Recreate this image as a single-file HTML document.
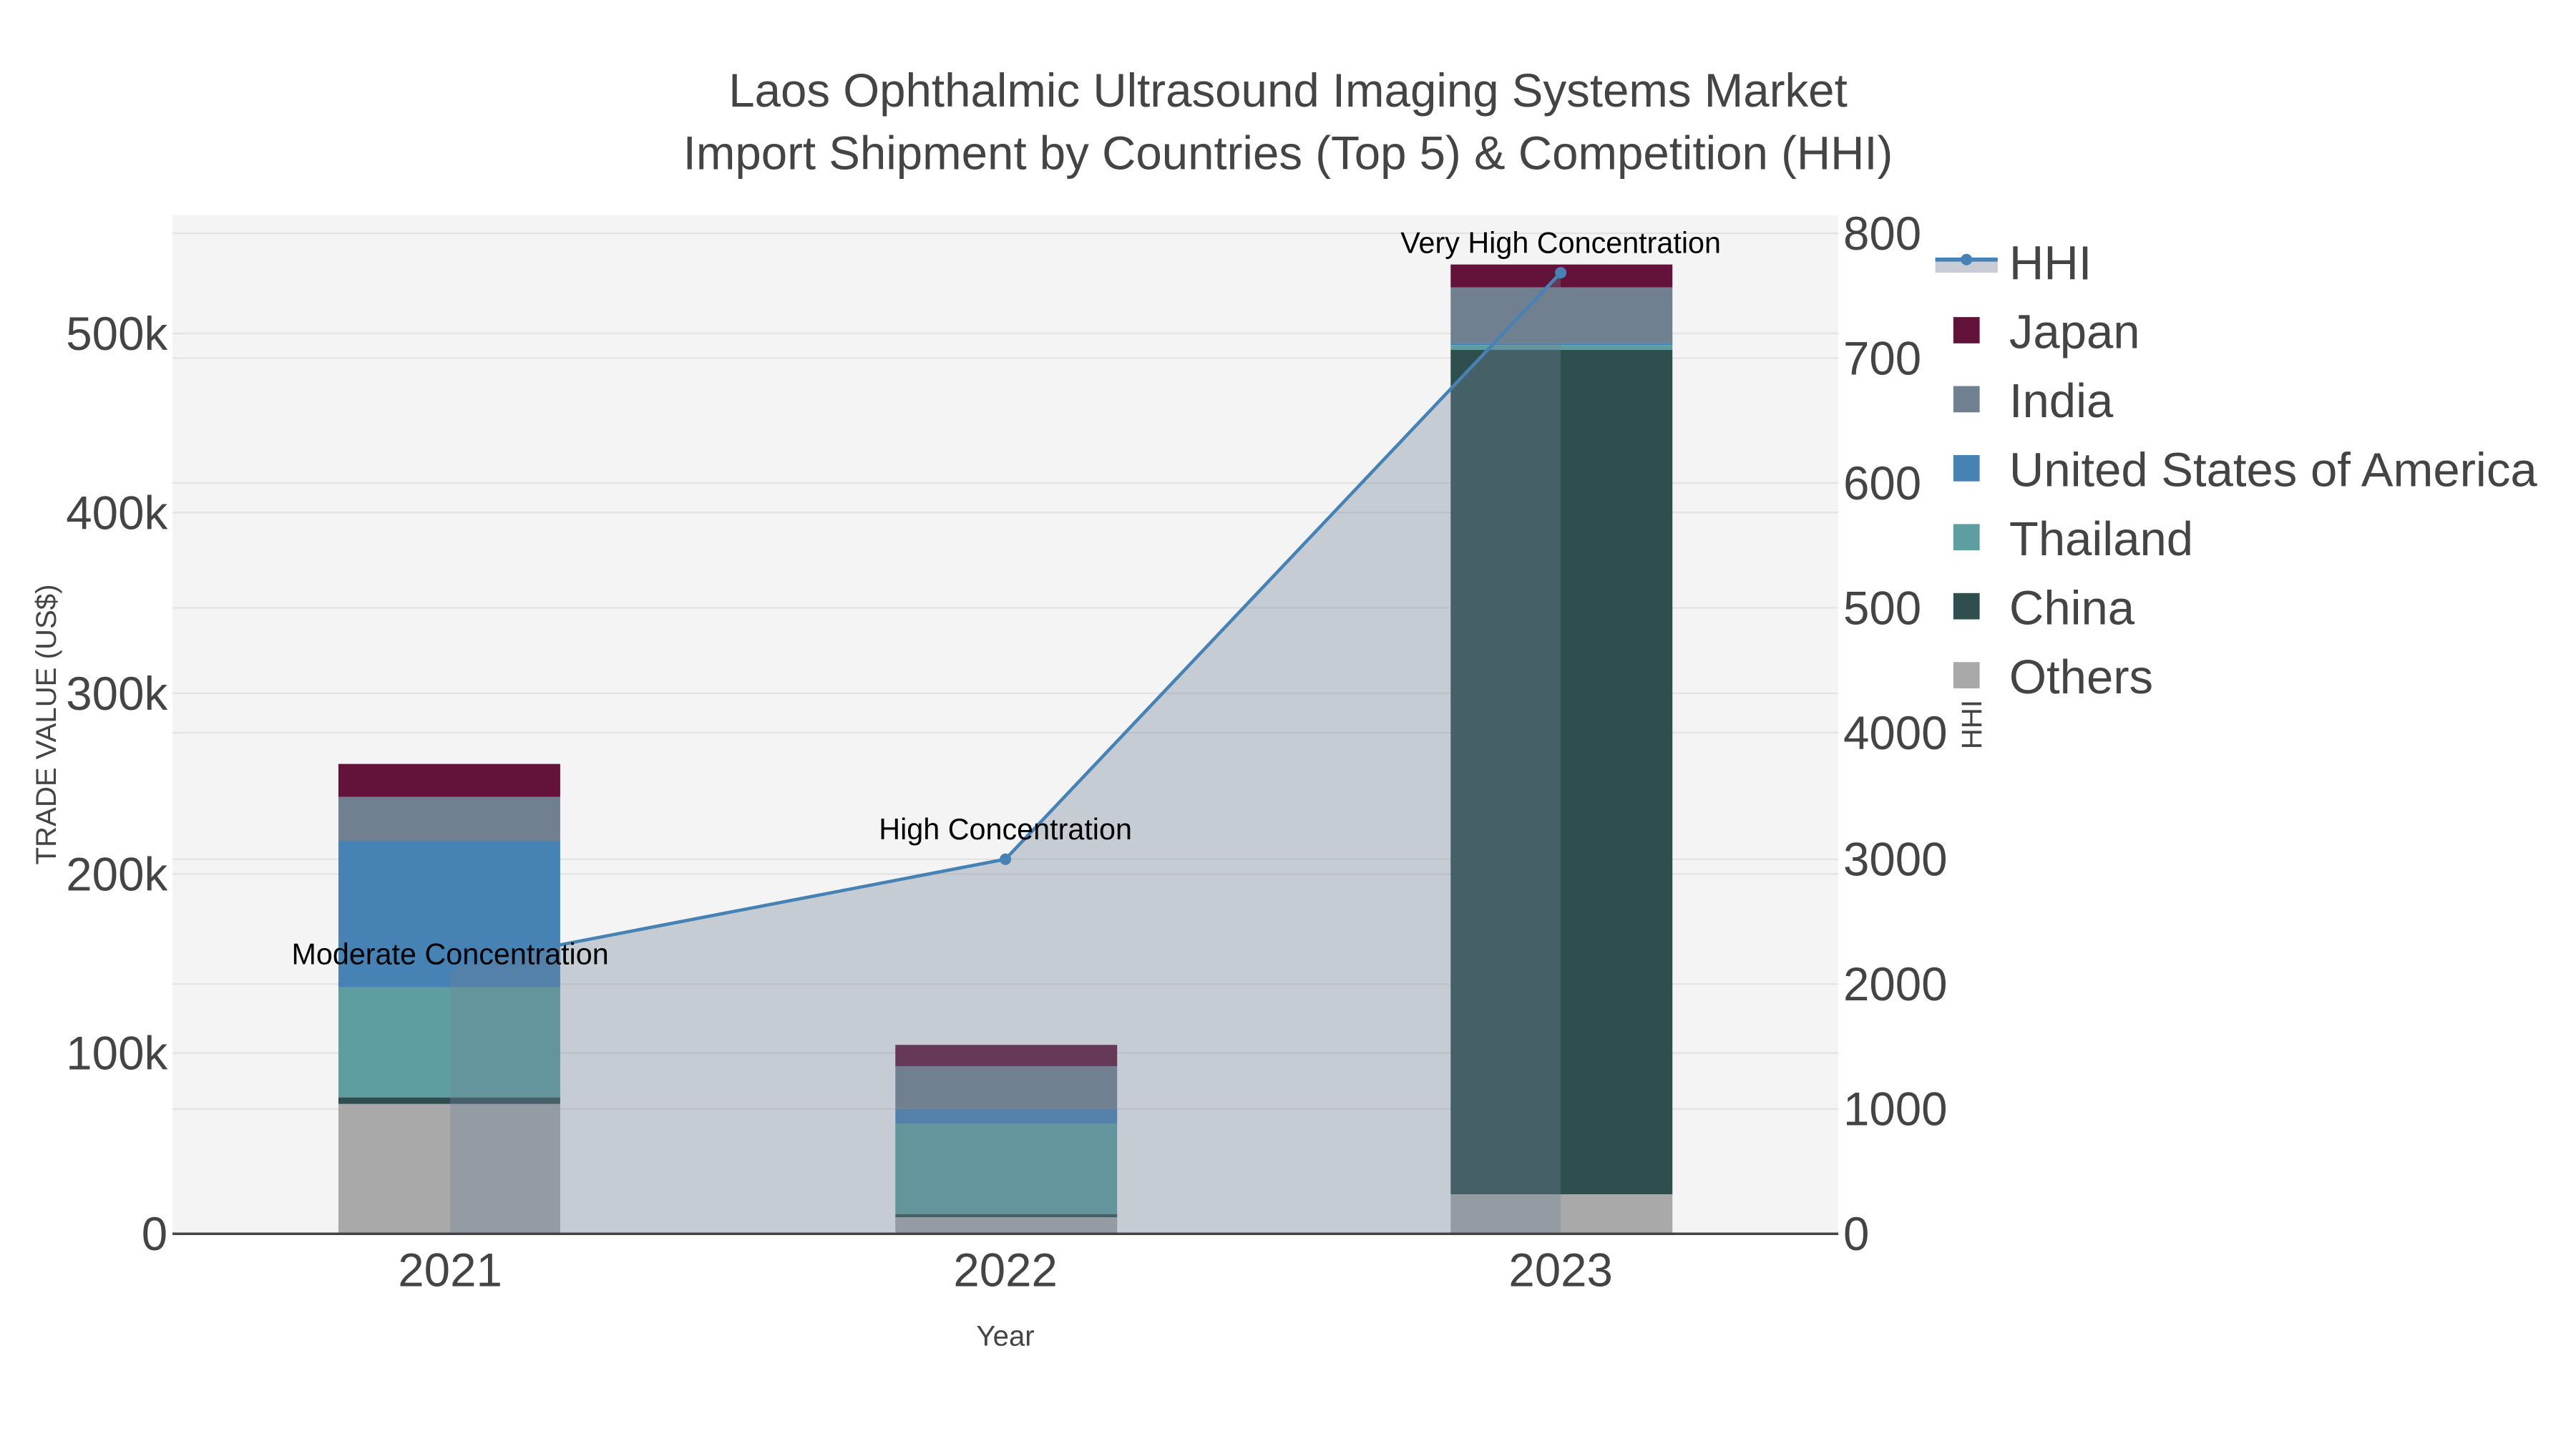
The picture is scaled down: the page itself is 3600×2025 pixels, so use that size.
<!DOCTYPE html>
<html><head><meta charset="utf-8"><style>
html,body{margin:0;padding:0;background:#fff;}
svg{display:block;}
text{font-family:"Liberation Sans",sans-serif;}
</style></head><body>
<svg width="3600" height="2025" viewBox="0 0 1568 882" preserveAspectRatio="none" xmlns="http://www.w3.org/2000/svg">
<rect x="0" y="0" width="1568" height="882" fill="#fff"/>
<rect x="105" y="131" width="1014" height="620" fill="#f4f4f4"/>
<g stroke="#e3e3e3" stroke-width="1">
<line x1="105" x2="1119" y1="641" y2="641"/><line x1="105" x2="1119" y1="532" y2="532"/>
<line x1="105" x2="1119" y1="422" y2="422"/><line x1="105" x2="1119" y1="312" y2="312"/>
<line x1="105" x2="1119" y1="203" y2="203"/>
<line x1="105" x2="1119" y1="675" y2="675"/><line x1="105" x2="1119" y1="599" y2="599"/>
<line x1="105" x2="1119" y1="523" y2="523"/><line x1="105" x2="1119" y1="446" y2="446"/>
<line x1="105" x2="1119" y1="370" y2="370"/><line x1="105" x2="1119" y1="294" y2="294"/>
<line x1="105" x2="1119" y1="218" y2="218"/><line x1="105" x2="1119" y1="142" y2="142"/>
</g>
<rect x="206" y="465" width="135" height="20" fill="#63133a"/>
<rect x="206" y="485" width="135" height="27" fill="#708090"/>
<rect x="206" y="512" width="135" height="89" fill="#4682b4"/>
<rect x="206" y="601" width="135" height="67" fill="#5f9ea0"/>
<rect x="206" y="668" width="135" height="4" fill="#2f4f4f"/>
<rect x="206" y="672" width="135" height="79" fill="#a9a9a9"/>
<rect x="545" y="636" width="135" height="13" fill="#63133a"/>
<rect x="545" y="649" width="135" height="26" fill="#708090"/>
<rect x="545" y="675" width="135" height="9" fill="#4682b4"/>
<rect x="545" y="684" width="135" height="55" fill="#5f9ea0"/>
<rect x="545" y="739" width="135" height="2" fill="#2f4f4f"/>
<rect x="545" y="741" width="135" height="10" fill="#a9a9a9"/>
<rect x="883" y="161" width="135" height="14" fill="#63133a"/>
<rect x="883" y="175" width="135" height="34" fill="#708090"/>
<rect x="883" y="209" width="135" height="1" fill="#4682b4"/>
<rect x="883" y="210" width="135" height="3" fill="#5f9ea0"/>
<rect x="883" y="213" width="135" height="514" fill="#2f4f4f"/>
<rect x="883" y="727" width="135" height="24" fill="#a9a9a9"/>
<polygon points="274,588 612,523 950,166 950,751 274,751" fill="rgb(112,128,150)" fill-opacity="0.35"/>
<polyline points="274,588 612,523 950,166" fill="none" stroke="#4682b4" stroke-width="2"/>
<circle cx="274" cy="588" r="3.5" fill="#4682b4"/><circle cx="612" cy="523" r="3.5" fill="#4682b4"/><circle cx="950" cy="166" r="3.5" fill="#4682b4"/>
<line x1="105" x2="1119" y1="751" y2="751" stroke="#444" stroke-width="1.5"/>
<g font-size="18" fill="#000" text-anchor="middle">
<text x="274" y="587">Moderate Concentration</text>
<text x="612" y="511">High Concentration</text>
<text x="950" y="154">Very High Concentration</text>
</g>
<g font-size="28.5" fill="#444" text-anchor="middle">
<text x="784" y="65">Laos Ophthalmic Ultrasound Imaging Systems Market</text>
<text x="784" y="103">Import Shipment by Countries (Top 5) &amp; Competition (HHI)</text>
</g>
<g font-size="28.5" fill="#444" text-anchor="end">
<text x="102" y="761">0</text><text x="102" y="651">100k</text><text x="102" y="542">200k</text>
<text x="102" y="432">300k</text><text x="102" y="322">400k</text><text x="102" y="213">500k</text>
</g>
<g font-size="28.5" fill="#444" text-anchor="start">
<text x="1122" y="761">0</text><text x="1122" y="685">1000</text><text x="1122" y="609">2000</text>
<text x="1122" y="533">3000</text><text x="1122" y="456">4000</text><text x="1122" y="380">500</text>
<text x="1122" y="304">600</text><text x="1122" y="228">700</text><text x="1122" y="152">800</text>
</g>
<g font-size="28.5" fill="#444" text-anchor="middle">
<text x="274" y="783">2021</text><text x="612" y="783">2022</text><text x="950" y="783">2023</text>
</g>
<text x="612" y="819" font-size="17.5" fill="#444" text-anchor="middle">Year</text>
<text transform="translate(34,441) rotate(-90)" font-size="17.5" fill="#444" text-anchor="middle">TRADE VALUE (US$)</text>
<text transform="translate(1206,441) rotate(-90)" font-size="17.5" fill="#444" text-anchor="middle">HHI</text>
<rect x="1178" y="159" width="38" height="7" fill="#c8ccd4"/>
<line x1="1178" x2="1216" y1="158" y2="158" stroke="#4682b4" stroke-width="2.5"/>
<circle cx="1197" cy="158" r="3.5" fill="#4682b4"/>
<rect x="1189" y="193" width="16" height="16" fill="#63133a"/>
<rect x="1189" y="235" width="16" height="16" fill="#708090"/>
<rect x="1189" y="277" width="16" height="16" fill="#4682b4"/>
<rect x="1189" y="319" width="16" height="16" fill="#5f9ea0"/>
<rect x="1189" y="361" width="16" height="16" fill="#2f4f4f"/>
<rect x="1189" y="403" width="16" height="16" fill="#a9a9a9"/>
<g font-size="29.2" fill="#444">
<text x="1223" y="170">HHI</text><text x="1223" y="212">Japan</text><text x="1223" y="254">India</text>
<text x="1223" y="296">United States of America</text><text x="1223" y="338">Thailand</text>
<text x="1223" y="380">China</text><text x="1223" y="422">Others</text>
</g>
</svg>
</body></html>
